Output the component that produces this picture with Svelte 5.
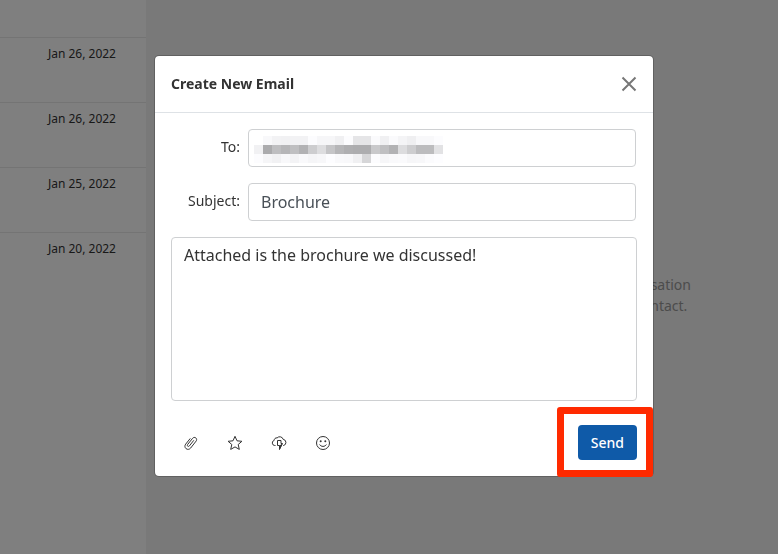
<script lang="ts">
    let subject: string = $state('Brochure');
    let body: string = $state('Attached is the brochure we discussed!');
    let recipient: string = $state('');
    let open: boolean = $state(true);

    const dates: string[] = [
        'Jan 26, 2022',
        'Jan 26, 2022',
        'Jan 25, 2022',
        'Jan 20, 2022',
    ];

    // grey levels of the redacted address, one row of cells per entry
    const mosaic: number[][] = [
        [255, 248, 242, 241, 242, 242, 252, 246, 246, 240, 252, 229, 229, 250, 240, 250, 244, 239, 248, 248, 252],
        [241, 171, 190, 182, 191, 178, 205, 221, 197, 182, 175, 173, 173, 201, 191, 178, 220, 205, 188, 188, 226],
        [252, 245, 241, 248, 243, 249, 245, 247, 253, 249, 248, 240, 214, 252, 246, 249, 250, 246, 247, 251, 253],
    ];
    const cell: number = 9;
</script>

<div class="app">
    <aside class="list">
        <div class="row first"></div>
        {#each dates as date}
            <div class="row">{date}</div>
        {/each}
    </aside>
    <main class="empty">
        <p>conversation<br />contact.&nbsp;</p>
    </main>
</div>

{#if open}
    <div class="backdrop">
        <div class="modal" role="dialog" aria-labelledby="modal-title">
            <header>
                <h1 id="modal-title">Create New Email</h1>
                <button
                    type="button"
                    class="close"
                    aria-label="Close"
                    onclick={() => (open = false)}
                >
                    <svg width="16" height="16" viewBox="0 0 16 16">
                        <path d="M1.5 1.5 14.5 14.5M14.5 1.5 1.5 14.5" />
                    </svg>
                </button>
            </header>
            <form onsubmit={(e) => e.preventDefault()}>
                <div class="field">
                    <label for="to">To:</label>
                    <div class="control">
                        <input type="text" id="to" bind:value={recipient} />
                        <svg
                            class="mosaic"
                            width="189"
                            height="27"
                            viewBox="0 0 189 27"
                            shape-rendering="crispEdges"
                            aria-hidden="true"
                        >
                            {#each mosaic as levels, y}
                                {#each levels as v, x}
                                    <rect
                                        x={x * cell}
                                        y={y * cell}
                                        width={cell}
                                        height={cell}
                                        fill={`rgb(${v}, ${v}, ${Math.min(v + 2, 255)})`}
                                    />
                                {/each}
                            {/each}
                        </svg>
                    </div>
                </div>
                <div class="field">
                    <label for="subject">Subject:</label>
                    <div class="control">
                        <input type="text" id="subject" bind:value={subject} />
                    </div>
                </div>
                <textarea aria-label="Message" bind:value={body}></textarea>
                <div class="footer">
                    <div class="tools">
                        <button type="button" aria-label="Attach file">
                            <svg width="16" height="16" viewBox="0 0 16 16">
                                <path
                                    d="M10.8 5.3 6.4 10.9c-.5.6-1.2.7-1.7.3s-.5-1.1-.1-1.7l5-6.2c.8-1 2.2-1.2 3.2-.4s1.1 2.2.3 3.2l-5.4 6.9c-1.2 1.5-3.2 1.8-4.6.7s-1.6-3.1-.4-4.6l4.6-5.7"
                                />
                            </svg>
                        </button>
                        <button type="button" aria-label="Templates">
                            <svg width="16" height="16" viewBox="0 0 16 16">
                                <path
                                    d="M8 1.3 10 5.8l4.9.5-3.7 3.2 1.1 4.9L8 11.9l-4.3 2.5 1.1-4.9L1.1 6.3 6 5.8z"
                                />
                            </svg>
                        </button>
                        <button type="button" aria-label="Automations">
                            <svg width="16" height="16" viewBox="0 0 16 16">
                                <path
                                    d="M4.5 10.5H3.7a2.6 2.6 0 0 1-.5-5.1 2.4 2.4 0 0 1 2.9-2.5 3.6 3.6 0 0 1 6.1 1.5 3.1 3.1 0 0 1 .3 6.1H12"
                                />
                                <path d="M6.5 5.5h3.5V8.5h1.5L8.5 14.5V10.5H6.5z" />
                                <path class="solid" d="M8.5 10.5 11.5 8.500 8.500 15z" />
                            </svg>
                        </button>
                        <button type="button" aria-label="Insert emoji">
                            <svg width="16" height="16" viewBox="0 0 16 16">
                                <circle cx="8" cy="8" r="6.5" />
                                <path d="M4.6 9.5c1.4 2.5 5.4 2.5 6.8 0" />
                                <circle class="solid" cx="5.7" cy="6.2" r="1" />
                                <circle class="solid" cx="10.3" cy="6.2" r="1" />
                            </svg>
                        </button>
                    </div>
                    <button type="submit" class="send">Send</button>
                </div>
            </form>
            <div class="highlight"></div>
        </div>
    </div>
{/if}

<style>
    :global(body) {
        margin: 0;
        font-family: 'Noto Sans', 'Open Sans', sans-serif;
        font-size: 14px;
        color: #333;
    }

    .app {
        display: flex;
        height: 100vh;
        overflow: hidden;
        background-color: #f2f2f2;
    }

    .list {
        box-sizing: border-box;
        flex: 0 0 146px;
        background-color: #fff;
    }

    .row {
        box-sizing: border-box;
        height: 65px;
        padding: 7px 30px 0 0;
        border-top: 1px solid #e8e8e8;
        font-size: 12px;
        line-height: 18px;
        text-align: right;
    }

    .row.first {
        height: 37px;
        border-top: none;
    }

    .empty {
        display: flex;
        flex: 1;
        align-items: center;
        justify-content: flex-end;
        padding: 36px 87px 0 0;
        color: #999;
        line-height: 21px;
        text-align: right;
    }

    .empty p {
        margin: 0;
    }

    .backdrop {
        position: fixed;
        inset: 0;
        box-sizing: border-box;
        padding: 55px 0 0 30px;
        background-color: rgba(0, 0, 0, 0.5);
    }

    .modal {
        position: relative;
        box-sizing: border-box;
        max-width: 500px;
        margin: 0 auto;
        background-color: #fff;
        background-clip: padding-box;
        border: 1px solid rgba(0, 0, 0, 0.2);
        border-radius: 5px;
    }

    header {
        display: flex;
        align-items: center;
        justify-content: space-between;
        padding: 16px;
        border-bottom: 1px solid #dee2e6;
    }

    h1 {
        margin: 0;
        font-size: 14px;
        line-height: 24px;
    }

    button {
        padding: 0;
        border: none;
        background: none;
        font-family: inherit;
        font-size: 14px;
        cursor: pointer;
    }

    svg {
        display: block;
        fill: none;
    }

    .close svg {
        stroke: #777;
        stroke-width: 2;
    }

    form {
        padding: 16px;
    }

    .field {
        display: flex;
        align-items: flex-start;
        margin: 0 1px 16px 0;
    }

    label {
        flex: 0 0 69px;
        padding: 8px 8px 0 0;
        line-height: 20px;
        text-align: right;
    }

    .control {
        position: relative;
        flex: 1;
    }

    input,
    textarea {
        display: block;
        box-sizing: border-box;
        width: 100%;
        border: 1px solid #ced0d2;
        border-radius: 4px;
        background-color: #fff;
        font-family: inherit;
        font-size: 16px;
        line-height: 24px;
    }

    input {
        height: 38px;
        padding: 6px 12px;
        color: #495057;
    }

    textarea {
        height: 164px;
        padding: 5px 12px;
        color: #333;
        resize: none;
    }

    .mosaic {
        position: absolute;
        top: 7px;
        left: 6px;
    }

    .footer {
        display: flex;
        align-items: center;
        justify-content: space-between;
        padding: 24px 0 0 12px;
    }

    .tools {
        display: flex;
        gap: 28px;
    }

    .tools svg {
        stroke: #333;
        stroke-width: 1;
        stroke-linejoin: round;
    }

    .tools .solid {
        fill: #333;
        stroke: none;
    }

    .send {
        padding: 0 13px;
        border-radius: 4px;
        background-color: #0f5aa8;
        color: #fff;
        font-weight: 500;
        line-height: 35px;
    }

    .highlight {
        position: absolute;
        right: 0;
        bottom: -1px;
        box-sizing: border-box;
        width: 96px;
        height: 70px;
        border: 7px solid #ff2a00;
        border-radius: 3px;
        pointer-events: none;
    }
</style>
